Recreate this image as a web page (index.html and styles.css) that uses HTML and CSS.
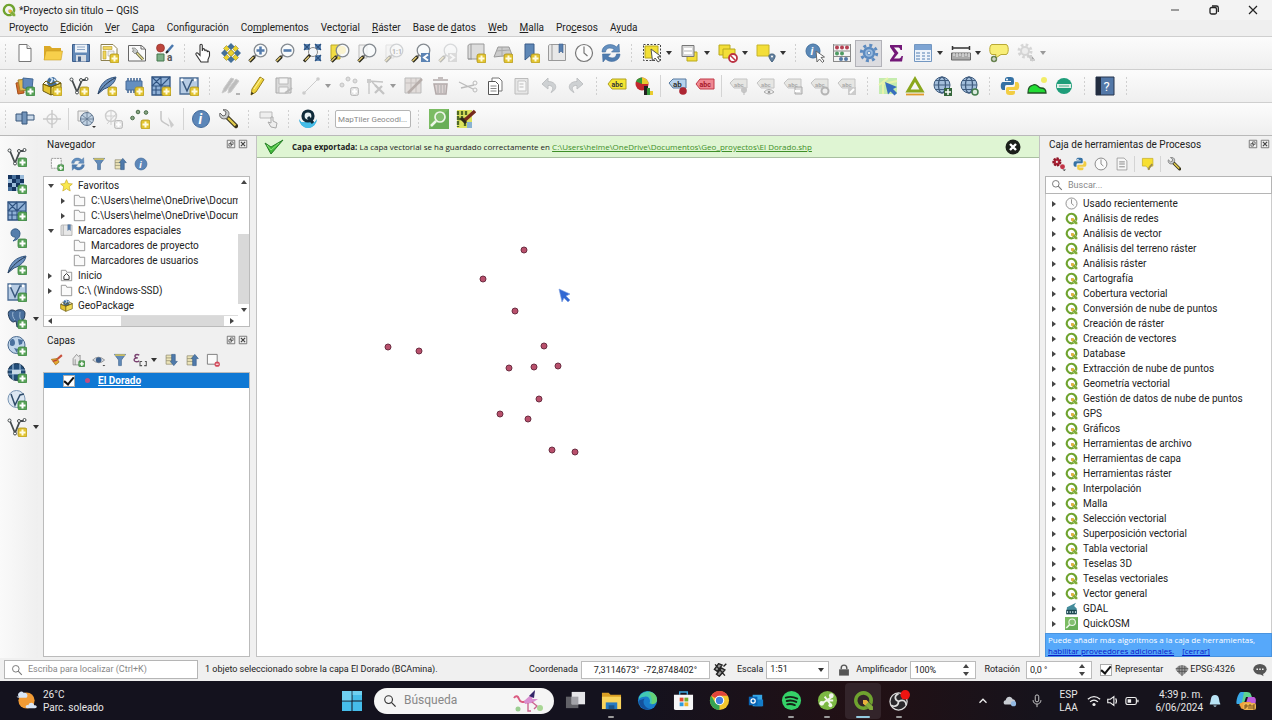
FILE: index.html
```html
<!DOCTYPE html>
<html lang="es">
<head>
<meta charset="utf-8">
<meta name="viewport" content="width=device-width, initial-scale=1">
<title>*Proyecto sin título — QGIS</title>
<link rel="stylesheet" href="styles.css">
</head>
<body>
<svg class="sprite" aria-hidden="true">
  <symbol id="by" viewBox="0 0 20 20"><rect x="11" y="11" width="9" height="9" rx="2" fill="#e3c531" stroke="#a98f1b" stroke-width=".8"/><path d="M15.500 12.500v6M12.500 15.500h6" stroke="#fffbe0" stroke-width="2"/></symbol>
  <symbol id="bg" viewBox="0 0 20 20"><rect x="11" y="11" width="9" height="9" rx="2" fill="#5aa35a" stroke="#35803b" stroke-width=".8"/><path d="M15.500 12.500v6M12.500 15.500h6" stroke="#fff" stroke-width="2"/></symbol>
  <symbol id="bx" viewBox="0 0 20 20"><rect x="11.500" y="11.500" width="8" height="8" rx="2" fill="#e2e2e2" stroke="#bbb"/><path d="M15.500 13v5M13 15.500h5" stroke="#fff" stroke-width="2"/></symbol>
  <symbol id="qgis" viewBox="0 0 20 20"><path d="M10 1a9 9 0 1 0 4.500 16.800L12 15.200a5.600 5.600 0 1 1 3.300-3.700l2.700 2.700A9 9 0 0 0 10 1z" fill="#6fa32f"/><path d="M9.500 9.500h3.200l6.300 6.300v3.200h-3.200L9.500 12.700z" fill="#82ad3a"/><path d="M9.500 9.500h3.200l2 2-3.200 3.200-2-2z" fill="#e8b13c"/></symbol>
  <symbol id="doc" viewBox="0 0 20 20"><path d="M4 1.500h8l4 4v13H4z" fill="#fff" stroke="#777"/><path d="M12 1.500v4h4" fill="#eee" stroke="#777"/></symbol>
  <symbol id="open" viewBox="0 0 20 20"><path d="M1 17V3h6l2 2h9v12z" fill="#dba927"/><path d="M1 17 3 8h16.500L18 17z" fill="#f7cf4b" stroke="#c99d22" stroke-width=".6"/></symbol>
  <symbol id="save" viewBox="0 0 20 20"><path d="M1.500 1.500h17v17h-17z" fill="#6288b6" stroke="#3d5e8c"/><path d="M4 1.500h12v8H4z" fill="#edf2f8"/><path d="M6 4h8M6 6.500h8" stroke="#8fa7c5"/><path d="M5 12h10v6.500H5z" fill="#d5dbe3"/><path d="M7 13.500h3v5H7z" fill="#46648d"/></symbol>
  <symbol id="layout" viewBox="0 0 20 20"><path d="M2 1.500h12l4 4v12H2z" fill="#fff" stroke="#8d8150"/><path d="M4 3.500h9v3H4zM4 8h3v8H4z" fill="#f1d65c" stroke="#b39a2b" stroke-width=".6"/><path d="M9 8h6v5H9z" fill="#eee" stroke="#aaa" stroke-width=".6"/><use href="#by"/></symbol>
  <symbol id="layoutmgr" viewBox="0 0 20 20"><path d="M1.500 2.500h13l4 3.500v12h-17z" fill="#fafafa" stroke="#666"/><path d="M14 2.500V6h4" fill="none" stroke="#666"/><path d="m9 9 7 7.500" stroke="#5f6046" stroke-width="3"/><path d="m10 10 6 6.500" stroke="#e4dc91" stroke-width="1.300"/><path d="M5 5l3 0 3 3-3 3-3-3 2 0z" fill="#c7cbc9" stroke="#777" stroke-width=".6"/></symbol>
  <symbol id="style" viewBox="0 0 20 20"><circle cx="5.500" cy="5" r="4" fill="#bd453c" stroke="#8c2922" stroke-width=".6"/><path d="M2 11h7v7H2z" fill="#7db087" stroke="#44774d"/><path d="m12 9 6-7" stroke="#4a78ae" stroke-width="2.500"/><path d="m11 10 2-2" stroke="#222" stroke-width="2"/><text x="12" y="18" font-size="10" font-weight="700" fill="#555">a</text></symbol>
  <symbol id="hand" viewBox="0 0 20 20"><path d="M7 19 2 11.500c-.6-1.600 1-2.200 2-1.200l2 2V2.500c0-1.700 2.200-1.700 2.300 0V8l.3-1.500c.6-1.300 2-1 2.200.3V8c.5-1.500 2.200-1.300 2.400.2V9c.4-1.300 2.300-1 2.300.5V13l-1.500 3.500V19z" fill="#fff" stroke="#333" stroke-width="1.100"/></symbol>
  <symbol id="panlayer" viewBox="0 0 20 20"><path d="m10 6.500 3.500 3.500-3.500 3.500L6.500 10z" fill="#ecd32f" stroke="#9f8b1d"/><path d="m5.500 2.500 3 3-3 3-3-3zM14.500 2.500l3 3-3 3-3-3zM5.500 11.500l3 3-3 3-3-3zM14.500 11.500l3 3-3 3-3-3z" fill="#ecd32f" stroke="#988a28" stroke-width=".6"/><path d="m10 0 3.500 3.500L10 7 6.500 3.500zM10 20l3.500-3.500L10 13l-3.500 3.500zM0 10l3.500-3.500L7 10l-3.500 3.500zM20 10l-3.500-3.500L13 10l3.500 3.500z" fill="#44709a"/></symbol>
  <symbol id="lens" viewBox="0 0 20 20"><circle cx="12.500" cy="7.500" r="6.300" fill="#f9fbfd" fill-opacity=".8" stroke="#858b91" stroke-width="1.300"/><path d="m8 12-2.200 2.200" stroke="#777" stroke-width="2"/><path d="m6.500 13.500-5 5" stroke="#28271b" stroke-width="3.400"/><path d="m5.500 14-4 4" stroke="#e3ca74" stroke-width="1.400"/></symbol>
  <symbol id="zin" viewBox="0 0 20 20"><use href="#lens"/><path d="M12.500 3.500v8M8.500 7.500h8" stroke="#547cad" stroke-width="2.500"/></symbol>
  <symbol id="zout" viewBox="0 0 20 20"><use href="#lens"/><path d="M8.500 7.500h8" stroke="#547cad" stroke-width="2.600"/></symbol>
  <symbol id="zfull" viewBox="0 0 20 20"><path d="M2 1h6v6H2zM13 1h6v6h-6zM13 12h6v6h-6z" fill="#5f88b6"/><path d="m2 1 6 6M8 1 2 7M13 1l6 6M19 1l-6 6M13 12l6 6M19 12l-6 6" stroke="#2c507d" stroke-width="1.300"/><circle cx="11" cy="9" r="4.500" fill="#f4f7fa" stroke="#888"/><path d="m8 12-6 6.500" stroke="#28271b" stroke-width="3"/><path d="m7 13.500-4 4" stroke="#e3ca74" stroke-width="1.200"/></symbol>
  <symbol id="zsel" viewBox="0 0 20 20"><path d="M1 2h9v14H1z" fill="#f2dd43" stroke="#bba82b"/><use href="#lens"/><circle cx="12" cy="7" r="4" fill="#faf3cf"/></symbol>
  <symbol id="zlayer" viewBox="0 0 20 20"><path d="M2 2h8v13H2z" fill="#f2f2f2" stroke="#bbb"/><use href="#lens"/></symbol>
  <symbol id="znat" viewBox="0 0 20 20"><g opacity=".35"><use href="#zlayer"/><text x="8" y="10.500" font-size="7" font-weight="700" fill="#444">1:1</text></g></symbol>
  <symbol id="zlast" viewBox="0 0 20 20"><use href="#lens"/><path d="M10 10h9v9h-9z" fill="#5c84b4"/><path d="m17 11.500-4 3 4 3" fill="none" stroke="#fff" stroke-width="2"/></symbol>
  <symbol id="znext" viewBox="0 0 20 20"><g opacity=".28"><use href="#lens"/><path d="M10 10h9v9h-9z" fill="#999"/><path d="m12 11.500 4 3-4 3" fill="none" stroke="#fff" stroke-width="2"/></g></symbol>
  <symbol id="newmap" viewBox="0 0 20 20"><path d="M2 3c0-1.500 2-2 3-2h13v15H2z" fill="#ddd" stroke="#999"/><path d="M5 1v15M2 16h4" stroke="#999" fill="none"/><use href="#by"/></symbol>
  <symbol id="map3d" viewBox="0 0 20 20"><path d="M1 14 5 4h11l3 8z" fill="#ccc" stroke="#999"/><path d="m3 8 14-1M9 4v10" stroke="#aaa"/><use href="#by"/></symbol>
  <symbol id="bookmark" viewBox="0 0 20 20"><path d="M5 1h9v16l-4.500-4L5 17z" fill="#5e87b6" stroke="#3a5d89"/><use href="#by"/></symbol>
  <symbol id="bmark2" viewBox="0 0 20 20"><path d="M1.500 3c0-1 1-1.500 2-1.500h15v16h-17z" fill="#e8e8e8" stroke="#999"/><path d="M5 2v15.500" stroke="#999"/><path d="M12 1h4v9l-2-2-2 2z" fill="#587fae" stroke="#395d8c" stroke-width=".6"/></symbol>
  <symbol id="clock" viewBox="0 0 20 20"><circle cx="10" cy="10" r="8.500" fill="#fbfbfb" stroke="#777" stroke-width="1.200"/><path d="M10 3.500V10l3.500 3" fill="none" stroke="#777" stroke-width="1.200"/></symbol>
  <symbol id="refresh" viewBox="0 0 20 20"><path d="M1 9C1 2 10-1 15.500 4l2.500-3 .5 8h-8l2.600-2.600C9 4 5 5 4.500 9z" fill="#638fbf" stroke="#416c9c" stroke-width=".6"/><path d="M19 11c0 7-9 10-14.500 5L2 19l-.5-8h8l-2.600 2.600C11 16 15 15 15.500 11z" fill="#4e7cb0" stroke="#416c9c" stroke-width=".6"/></symbol>
  <symbol id="select" viewBox="0 0 20 20"><path d="M1.500 1.500h17v16h-17z" fill="none" stroke="#444" stroke-dasharray="2 1.500"/><path d="M3 3h13v12H3z" fill="#f2df35" stroke="#b9a91e"/><path d="m9 6 1.500 12 2.700-3 2.800 4 2-1.400-2.500-3.700 3.500-.4z" fill="#fff" stroke="#555"/></symbol>
  <symbol id="selval" viewBox="0 0 20 20"><path d="M7 9h10v9H7z" fill="#f3de38" stroke="#b9a91e"/><path d="M2 2.500h12v11H2z" fill="#d9d9d9" stroke="#777"/><path d="M4 6h8M4 10h8" stroke="#fff" stroke-width="2"/></symbol>
  <symbol id="desel" viewBox="0 0 20 20"><path d="M1 2h11v10H1z" fill="#f3de38" stroke="#b9a91e"/><path d="M5 6h12v9H5z" fill="#f3de38" stroke="#b9a91e"/><circle cx="15" cy="15" r="4" fill="#fff" stroke="#bb3344" stroke-width="1.800"/><path d="m12.500 12.500 5 5" stroke="#bb3344" stroke-width="1.500"/></symbol>
  <symbol id="selloc" viewBox="0 0 20 20"><path d="M1 2h12v11H1z" fill="#f3de38" stroke="#c6b42b"/><path d="M16 19c-5-6-3-8 0-8s5 2 0 8z" fill="#6482a0" stroke="#44627f"/><circle cx="16" cy="13.500" r="1" fill="#fff"/></symbol>
  <symbol id="ident" viewBox="0 0 20 20"><circle cx="8" cy="8" r="7" fill="#5a88b7" stroke="#43719f"/><text x="5.500" y="12" font-size="11" font-style="italic" font-weight="700" fill="#fff">i</text><path d="m11 8 1 11 2.500-3 3 3.500 1.500-1.500-3-3.500 3.500-.5z" fill="#fff" stroke="#666"/></symbol>
  <symbol id="abacus" viewBox="0 0 20 20"><path d="M1.500 1v18M18.500 1v18M1 2h18M1 8h18M1 13.500h18M1 18.500h18" stroke="#8a8a8a" fill="none"/><g fill="#b54052"><circle cx="5" cy="4.500" r="2"/><circle cx="10" cy="4.500" r="2"/><circle cx="15" cy="4.500" r="2"/></g><g fill="#4e9b63"><circle cx="5" cy="10.500" r="2"/><circle cx="10" cy="10.500" r="2"/></g><g fill="#5479a6"><circle cx="9" cy="16" r="2"/><circle cx="14" cy="16" r="2"/></g></symbol>
  <symbol id="gear" viewBox="0 0 20 20"><circle cx="10" cy="10" r="7.700" fill="none" stroke="#5d8bc0" stroke-width="3" stroke-dasharray="3 3.050"/><circle cx="10" cy="10" r="5" fill="#9bbce0" stroke="#5d8bc0" stroke-width="2.500"/><circle cx="10" cy="10" r="1.800" fill="#e3ebf3" stroke="#5d8bc0"/></symbol>
  <symbol id="sigma" viewBox="0 0 20 20"><path d="M4 2h12v5h-1.500c-.5-2-1.500-2.500-3-2.500H8L12.500 10 8 15.500h4c2 0 3-.5 3.500-2.500H17l-1 5.500H4V17l4.500-6.500L4 4z" fill="#731878"/></symbol>
  <symbol id="table" viewBox="0 0 20 20"><path d="M1.500 1.500h17v17h-17z" fill="#edf3fa" stroke="#7397c1"/><path d="M2 2h16v5H2z" fill="#7da4d3"/><path d="M3 10h4M9 10h3M14 10h3M3 13h4M9 13h3M14 13h3M3 16h4M9 16h3M14 16h3" stroke="#86a6ca" stroke-width="1.400"/></symbol>
  <symbol id="ruler" viewBox="0 0 20 20"><path d="M1 5h18M1.500 3v4M18.500 3v4" stroke="#333" stroke-width="1.500"/><path d="M.5 10h19v7H.5z" fill="#aaa" stroke="#666"/><path d="M3 10v3M6 10v4M9 10v3M12 10v4M15 10v3M18 10v4" stroke="#eee"/></symbol>
  <symbol id="tip" viewBox="0 0 20 20"><path d="M3 1.500h14c3 0 3 10 0 10h-5l-6 4 1-4H3c-3 0-3-10 0-10z" fill="#f8ee77" stroke="#b9a935"/><circle cx="5" cy="16" r="3.200" fill="#688350"/><path d="M5 14v4M3 16h4" stroke="#eee"/></symbol>
  <symbol id="geargrey" viewBox="0 0 20 20"><g opacity=".35"><circle cx="9" cy="8" r="6" fill="none" stroke="#999" stroke-width="3" stroke-dasharray="2.500 2.200"/><circle cx="9" cy="8" r="4" fill="#ddd" stroke="#999" stroke-width="2"/><path d="m12 12 5 6m-2-6v5h4" stroke="#888" stroke-width="2"/></g></symbol>
  <symbol id="layers" viewBox="0 0 20 20"><path d="m1 7 7-1 1 11-6 1z" fill="#d36e2c" stroke="#a44c17"/><path d="m3 4 9-1v11l-7 1z" fill="#e2b84c" stroke="#a3812e"/><path d="m8 2 10 1-1 10-9-1z" fill="#6189bd" stroke="#426894"/><use href="#bg"/></symbol>
  <symbol id="gpkg" viewBox="0 0 20 20"><circle cx="10" cy="6" r="5" fill="#416e9f"/><path d="M8 2c3-1 3 3 0 5M12 3l3 4" stroke="#dfebf7" stroke-width="1.500" fill="none"/><path d="m1 8 8 3v8l-8-4z" fill="#e4c330" stroke="#6c5a0c"/><path d="m9 11 10-4v8L9 19z" fill="#f1db58" stroke="#6c5a0c"/><path d="m1 8 3-3 5 3 6-3 4 2-10 4z" fill="none" stroke="#6c5a0c"/></symbol>
  <symbol id="newgpkg" viewBox="0 0 20 20"><use href="#gpkg"/><use href="#by"/></symbol>
  <symbol id="vee" viewBox="0 0 20 20"><path d="m3 4 5 12 5-12h5" fill="none" stroke="#454b4d" stroke-width="1.800"/><g fill="#fff" stroke="#454b4d"><circle cx="2.500" cy="3.500" r="1.500"/><circle cx="8" cy="16.500" r="1.500"/><circle cx="12" cy="4" r="1.500"/><circle cx="17.500" cy="3" r="1.500"/></g></symbol>
  <symbol id="veey" viewBox="0 0 20 20"><use href="#vee"/><use href="#by"/></symbol>
  <symbol id="veeg" viewBox="0 0 20 20"><use href="#vee"/><use href="#bg"/></symbol>
  <symbol id="feather" viewBox="0 0 20 20"><path d="M1 18C3 8 9 2 19 1c-1 6-6 10-12 12z" fill="#6b91bf" stroke="#31537c"/><path d="M1 18C6 10 11 6 18 2" fill="none" stroke="#25364c"/></symbol>
  <symbol id="feathery" viewBox="0 0 20 20"><use href="#feather"/><use href="#by"/></symbol>
  <symbol id="featherg" viewBox="0 0 20 20"><use href="#feather"/><use href="#bg"/></symbol>
  <symbol id="chip" viewBox="0 0 20 20"><path d="M4 2v15M7 2v15M10 2v15M13 2v15M16 2v15" stroke="#476b98" stroke-width="1.600"/><path d="M2 5h16v9H2z" fill="#658fc0" stroke="#476b98"/><use href="#by"/></symbol>
  <symbol id="mesh" viewBox="0 0 20 20"><path d="M1 1h18v18H1z" fill="#8fb0d6" stroke="#2f5280" stroke-width="1.300"/><path d="M1 10h18M10 1v18M1 1l9 9M1 10l9-9M10 10l9-9M5 10v9M1 14h18M14 10v9" stroke="#2f5280" stroke-width="1.100"/></symbol>
  <symbol id="meshy" viewBox="0 0 20 20"><use href="#mesh"/><use href="#by"/></symbol>
  <symbol id="meshg" viewBox="0 0 20 20"><use href="#mesh"/><use href="#bg"/></symbol>
  <symbol id="virt" viewBox="0 0 20 20"><path d="M1 2h18v16H1z" fill="#b7cce4" stroke="#4b6c94" stroke-width="1.300"/><path d="M3 4l5 11 5-11h4" fill="none" stroke="#37577c" stroke-width="1.500"/><circle cx="3" cy="4" r="1.400" fill="#fff"/><circle cx="16" cy="4" r="1.400" fill="#fff"/></symbol>
  <symbol id="virty" viewBox="0 0 20 20"><use href="#virt"/><use href="#by"/></symbol>
  <symbol id="virtg" viewBox="0 0 20 20"><use href="#virt"/><use href="#bg"/></symbol>
  <symbol id="pencils" viewBox="0 0 20 20"><path d="m2 17 2-5L11 2l3 1-8 12zM8 17l1-5 7-9 3 2-8 11z" fill="#bdbdbd" stroke="#ccc"/><path d="M16 18h4" stroke="#777"/></symbol>
  <symbol id="pencil" viewBox="0 0 20 20"><path d="m4 19 1-6L13 1l4 2.500L9 16z" fill="#eed33c" stroke="#9b811a"/><path d="m7 13 7.500-11" stroke="#fff4a0"/><path d="m4 19 .6-3 2 1.300z" fill="#222"/></symbol>
  <symbol id="savegrey" viewBox="0 0 20 20"><path d="M2 2h15v15H2z" fill="#d9d9d9" stroke="#aaa"/><path d="M5 2h9v6H5zM5 11h9v6H5z" fill="#f5f5f5" stroke="#bbb"/><path d="m11 17 7-5" stroke="#bbb" stroke-width="2"/></symbol>
  <symbol id="linegrey" viewBox="0 0 20 20"><path d="M3 17 17 3" stroke="#ccc"/><circle cx="3" cy="17" r="1.800" fill="#ccc"/><circle cx="17" cy="3" r="1.800" fill="#ccc"/></symbol>
  <symbol id="ptsgrey" viewBox="0 0 20 20"><g fill="#ddd" stroke="#c4c4c4"><circle cx="3" cy="9" r="2"/><circle cx="9" cy="3" r="2"/><circle cx="16" cy="5" r="2"/></g><use href="#bx"/></symbol>
  <symbol id="nodegrey" viewBox="0 0 20 20"><path d="M3 18V5l14 1M6 6l5 5" fill="none" stroke="#c4c4c4" stroke-width="1.300"/><path d="M1 3h4v4H1z" fill="#ccc"/><path d="m9 17 7-7M9 9l9 9" stroke="#c4c4c4" stroke-width="2.300"/></symbol>
  <symbol id="attrgrey" viewBox="0 0 20 20"><path d="M1 2h16v15H1z" fill="#e1dcda" stroke="#bbb"/><path d="M1 7h16M7 2v15M12 2v15" stroke="#c5bfbd"/><path d="M4 17 18 3" stroke="#b7aeab" stroke-width="2.500"/></symbol>
  <symbol id="trash" viewBox="0 0 20 20"><path d="M2 4h15M7 2h5M3 8h13l-1 10H5z" fill="#ddd3d3" stroke="#b3aaaa" stroke-width="1.500"/><path d="M7 9v8M10 9v8M13 9v8" stroke="#aaa"/></symbol>
  <symbol id="cut" viewBox="0 0 20 20"><path d="m1 6 14 7M3 12l13-3" stroke="#bbb" stroke-width="1.300"/><circle cx="17" cy="7" r="2" fill="none" stroke="#bbb"/><circle cx="17" cy="14" r="2" fill="none" stroke="#bbb"/></symbol>
  <symbol id="copy" viewBox="0 0 20 20"><path d="M7 2h7l3 3v10H7z" fill="#fff" stroke="#777"/><path d="M3.500 5.500h7l3 3v10h-10z" fill="#fff" stroke="#555"/><path d="M5.500 10h6M5.500 12.500h6M5.500 15h6" stroke="#888"/></symbol>
  <symbol id="paste" viewBox="0 0 20 20"><path d="M3 2.500h13v15.500H3z" fill="#e6e6e6" stroke="#bbb"/><path d="M6 5h7l1 1v9H6z" fill="#f8f8f8" stroke="#c5c5c5"/><path d="M7.500 8h4M7.500 11h4" stroke="#bbb"/></symbol>
  <symbol id="undo" viewBox="0 0 20 20"><path d="M9 2 3 8l6 5V9.500c5-.5 6 3 3 7 8-4 5-11-3-11z" fill="#ced1d3" stroke="#bfc1c3"/></symbol>
  <symbol id="redo" viewBox="0 0 20 20"><path d="m11 2 6 6-6 5V9.500c-5-.5-6 3-3 7-8-4-5-11 3-11z" fill="#ced1d3" stroke="#bfc1c3"/></symbol>
  <symbol id="abc" viewBox="0 0 20 20"><path d="m1 8 4-5h14v10H5z" fill="#f5e633" stroke="#b1a221"/><text x="4.500" y="11" font-size="7" font-weight="700" fill="#333">abc</text></symbol>
  <symbol id="pie" viewBox="0 0 20 20"><circle cx="8" cy="8" r="6.500" fill="#c3272e"/><path d="M8 8V1.500A6.500 6.500 0 0 1 14.500 8z" fill="#e8cb2e"/><path d="M8 8 2 5.500C3 2.500 6 1.500 8 1.500z" fill="#36983a"/><path d="M10 10h4v9h-4z" fill="#222"/><path d="M13 12h3v7h-3z" fill="#36983a"/><path d="M16 15h3v4h-3z" fill="#e8cb2e"/></symbol>
  <symbol id="abpin" viewBox="0 0 20 20"><path d="m1 7 4-4h13v9H5z" fill="#b7d2ed" stroke="#56799f"/><text x="5" y="10.500" font-size="8" font-weight="700" fill="#333">ab</text><circle cx="15" cy="15" r="3.800" fill="#ad2532"/></symbol>
  <symbol id="abcred" viewBox="0 0 20 20"><path d="m1 8 4-5h14v10H5z" fill="#ef8892" stroke="#c13b49"/><text x="4.500" y="11" font-size="7" font-weight="700" fill="#a61427">abc</text></symbol>
  <symbol id="abcgrey" viewBox="0 0 20 20"><path d="m1 7 4-4h13v9H5z" fill="#e6e6e3" stroke="#c4c4c4"/><text x="5" y="10.500" font-size="6" font-weight="700" fill="#aaa">abc</text></symbol>
  <symbol id="lg1" viewBox="0 0 20 20"><use href="#abcgrey"/><circle cx="15" cy="14" r="3" fill="#c5c5c5"/><path d="M15 16v3" stroke="#bbb"/></symbol>
  <symbol id="lg2" viewBox="0 0 20 20"><use href="#abcgrey"/><path d="M8 16q5-5 10 0-5 4-10 0z" fill="#eee" stroke="#aaa"/><circle cx="13" cy="16" r="1.300" fill="#999"/></symbol>
  <symbol id="lg3" viewBox="0 0 20 20"><use href="#abcgrey"/><path d="M12 11h7v7h-7z" fill="#ddd" stroke="#aaa"/><path d="M12 15h5" stroke="#fff" stroke-width="2"/></symbol>
  <symbol id="lg4" viewBox="0 0 20 20"><use href="#abcgrey"/><circle cx="15" cy="15" r="3.500" fill="#eee" stroke="#b4b4b4" stroke-width="2"/></symbol>
  <symbol id="lg5" viewBox="0 0 20 20"><use href="#abcgrey"/><path d="M11 11h8v8h-8z" fill="#ccc"/><path d="m13 17 4-4" stroke="#fff" stroke-width="2"/></symbol>
  <symbol id="mapsel" viewBox="0 0 20 20"><path d="M1 2h18v16H1z" fill="#c5ecae"/><path d="M1 9 10 2M5 18V8l14-3" stroke="#e8f4ab" stroke-width="2" fill="none"/><path d="m7 6 12 5-4 2 4 4-2.500 2.500-4-4-2.500 3z" fill="#376ebd"/></symbol>
  <symbol id="tri" viewBox="0 0 20 20"><path d="M10 3 17 15H3z" fill="none" stroke="#8aa71d" stroke-width="3"/><path d="M1 18.500h18" stroke="#e09a28" stroke-width="1.800"/></symbol>
  <symbol id="globe" viewBox="0 0 20 20"><circle cx="10" cy="9" r="8" fill="#a3bedb" stroke="#405c7e"/><ellipse cx="10" cy="9" rx="3.500" ry="8" fill="none" stroke="#405c7e" stroke-width="1.300"/><path d="M2 9h16M3.500 4.500h13M3.500 13.500h13" stroke="#405c7e" stroke-width="1.200"/></symbol>
  <symbol id="globe1" viewBox="0 0 20 20"><use href="#globe"/><path d="M12 12h8v8h-8z" fill="#35653a"/><path d="M16 13v6m-3-3h6" stroke="#fff" stroke-width="1.500"/></symbol>
  <symbol id="globe2" viewBox="0 0 20 20"><use href="#globe"/><circle cx="16" cy="16" r="3" fill="#dceadf" stroke="#447e4d" stroke-width="1.500"/></symbol>
  <symbol id="python" viewBox="0 0 20 20"><path d="M9 1C5 1 5 2 5 5h6v1H3C0 6 0 14 3 14h2v-3c0-2 1-2 3-2h4c2 0 2-1 2-3 0-4 0-5-5-5z" fill="#3571a4"/><path d="M11 19c4 0 4-1 4-4H9v-1h8c3 0 3-8 0-8h-2v3c0 2-1 2-3 2H8c-2 0-2 1-2 3 0 4 0 5 5 5z" fill="#f2cd43"/><circle cx="7" cy="3.500" r="1" fill="#fff"/></symbol>
  <symbol id="hill" viewBox="0 0 20 20"><circle cx="17" cy="4" r="3" fill="#f2ed67"/><path d="M1 17c0-6 2-7 5-8 4-2 5 3 8 3 4 0 5 2 5 5z" fill="#22dc35" stroke="#225226" stroke-width="1.300"/></symbol>
  <symbol id="stop" viewBox="0 0 20 20"><circle cx="10" cy="10" r="8" fill="#1e9d79"/><path d="M3 8h14v4H3z" fill="#dfeee7"/><path d="M5 10h10" stroke="#50ab89"/></symbol>
  <symbol id="helpbook" viewBox="0 0 20 20"><path d="M1 1h18v18H1z" fill="#5378a8" stroke="#26354c"/><path d="M1 1h5v18H1z" fill="#222d40"/><text x="8.500" y="15" font-size="13" fill="#fff">?</text></symbol>
  <symbol id="boxes" viewBox="0 0 20 20"><path d="M1 5h8v7H1z" fill="#9bb5d2" stroke="#39577b"/><path d="M9 6h10v5H9z" fill="#cddbea" stroke="#39577b"/><path d="M7 3h5v12H7z" fill="#7193ba" stroke="#39577b"/></symbol>
  <symbol id="crossgrey" viewBox="0 0 20 20"><circle cx="10" cy="10" r="5" fill="none" stroke="#d0d0d0" stroke-width="1.400"/><path d="M10 1v18M1 10h18" stroke="#c8c8c8" stroke-width="1.400"/></symbol>
  <symbol id="geoglobe" viewBox="0 0 20 20"><path d="M2 2h10v10H2z" fill="#eee" stroke="#aaa"/><circle cx="11" cy="10" r="6.500" fill="#c0d1e2" stroke="#60758d"/><path d="M4 10h14M11 3v14M6 6l10 8M16 6 6 14" stroke="#60758d" stroke-width=".8"/><path d="m16 17h4l-2 2z" fill="#333"/></symbol>
  <symbol id="polygrey" viewBox="0 0 20 20"><circle cx="8" cy="7" r="5.500" fill="none" stroke="#ccc" stroke-width="1.400"/><path d="M8 1v15M2 7h12M4 15 13 5" stroke="#d0d0d0"/><use href="#bx"/></symbol>
  <symbol id="ptsy" viewBox="0 0 20 20"><g fill="#8aa685" stroke="#496c48"><circle cx="2.500" cy="9" r="1.800"/><circle cx="8" cy="3" r="1.800"/><circle cx="16" cy="3.500" r="1.800"/></g><use href="#by"/></symbol>
  <symbol id="curve" viewBox="0 0 20 20"><path d="M4 2v8c0 4 6 4 8 7" fill="none" stroke="#c5c5c5" stroke-width="1.500"/><path d="m11 8 6 8-3 3" fill="#ccc"/></symbol>
  <symbol id="info" viewBox="0 0 20 20"><circle cx="10" cy="10" r="8.500" fill="#5c86b8" stroke="#446b9b"/><text x="7.500" y="15" font-size="14" font-style="italic" font-weight="700" fill="#fff">i</text></symbol>
  <symbol id="wrench" viewBox="0 0 20 20"><path d="m9 8 9 9" stroke="#3a351d" stroke-width="4.500" stroke-linecap="round"/><path d="m10 9 7.500 7.500" stroke="#e1cb4b" stroke-width="2.300"/><path d="M2 4 5 7l2.500-1L8 3 5 .8c5-1 7 3 5.500 6L8.500 9.500C4 11 .5 8 2 4z" fill="#c9cccd" stroke="#666"/></symbol>
  <symbol id="boxhand" viewBox="0 0 20 20"><path d="M1 3h12v6H1z" fill="#eee" stroke="#bbb"/><path d="m12 18-3-5 3 1V8h2v4l4 2-1 5z" fill="#eee" stroke="#aaa"/></symbol>
  <symbol id="qms" viewBox="0 0 20 20"><path d="M1 10a9 9 0 0 0 18 0l-3 4c-3 3-9 3-12 0z" fill="#2ca9dc"/><path d="M2 13h16q-3 6-8 6t-8-6z" fill="#45bde8"/><circle cx="10" cy="7" r="5" fill="#e8f2f5" stroke="#102b3a" stroke-width="3.200"/><path d="m10 8 5 6" stroke="#102b3a" stroke-width="3"/></symbol>
  <symbol id="osm" viewBox="0 0 20 20"><path d="M0 0h20v20H0z" fill="#68ae57"/><path d="M0 0h20L0 20z" fill="#8dca70" opacity=".5"/><circle cx="11" cy="8" r="5" fill="#83be70" stroke="#eef6e9" stroke-width="1.700"/><path d="m7 12-5 5" stroke="#eef6e9" stroke-width="2.500"/></symbol>
  <symbol id="osmedit" viewBox="0 0 20 20"><path d="M1 1h15v18H1z" fill="#dce35e"/><path d="M2 2v16M6 2v7M10 2v5M2 10h7v8" stroke="#4f6823" stroke-width="2.300" fill="none" stroke-dasharray="4 1"/><path d="M11 13h5v6h-5z" fill="#8ab3d1"/><path d="m9 11 10-9" stroke="#762a1d" stroke-width="3.500"/><path d="m5 9 5 5" stroke="#2f291a" stroke-width="3"/></symbol>
  <symbol id="raster" viewBox="0 0 20 20"><path d="M1 1h16v16H1z" fill="#9bbbd9"/><path d="M1 1h4v4H1zM9 1h4v4H9zM5 5h4v4H5zM13 5h4v4h-4zM1 9h4v4H1zM9 9h4v4H9zM5 13h4v4H5z" fill="#15345f"/><path d="M5 1h4v4H5zM9 5h4v4H9zM1 13h4v4H1z" fill="#47709b"/><use href="#bg"/></symbol>
  <symbol id="comma" viewBox="0 0 20 20"><path d="M4 5c0-5 8-6 9 0 0 5-3 7-7 8 2-2 3-3 2-4-2 0-4-1-4-4z" fill="#557eac" stroke="#355d88"/><use href="#bg"/></symbol>
  <symbol id="pg" viewBox="0 0 20 20"><path d="M1.500 3c2-3 5-2 7-1 3-2 9-2 9.500 2 0 4-1 7-4 8v5l-4 1-1-6-2.500 1C3 13 .5 6 1.500 3z" fill="#496f9c" stroke="#243c59"/><path d="M6 3c-1 3 0 6 2 8M13 3c0 3-1 5 1 8" stroke="#9db8d4" fill="none"/><use href="#bg"/></symbol>
  <symbol id="wglobe" viewBox="0 0 20 20"><circle cx="9.500" cy="9" r="8.500" fill="#c0d5ea" stroke="#49698e"/><path d="M3 5c3-4 5-1 5 2S5 11 3 9zM11 3l5 1-1 4-3 1zM7 12l4 1-1 4z" fill="#49709d"/><use href="#bg"/></symbol>
  <symbol id="wcs" viewBox="0 0 20 20"><circle cx="9.500" cy="9" r="8.500" fill="#224c77" stroke="#152f4b"/><path d="M1 7h17M1 11h17M6 1v16M13 1v16" stroke="#95b6d5" stroke-width="1.200"/><path d="M5 7h9v4H5z" fill="#c9d9e8"/><use href="#bg"/></symbol>
  <symbol id="wfs" viewBox="0 0 20 20"><circle cx="9.500" cy="9" r="8.500" fill="#dce7f2" stroke="#7b97b5"/><path d="m4 4 4 11 5-10 4-1" fill="none" stroke="#304d6b" stroke-width="1.500"/><use href="#bg"/></symbol>
  <symbol id="folder" viewBox="0 0 20 20"><path d="M2 18V2h7l1.500 3H18v13z" fill="#fafafa" stroke="#8a8a8a" stroke-width="1.300"/></symbol>
  <symbol id="home" viewBox="0 0 20 20"><use href="#folder"/><path d="m6 11 4-4 4 4v5H6z" fill="#fff" stroke="#333" stroke-width="1.500"/></symbol>
  <symbol id="star" viewBox="0 0 20 20"><path d="m10 1 2.700 6 6.300.6-4.800 4.200 1.500 6.700-5.700-3.500-5.700 3.500 1.500-6.700L1 7.600 7.300 7z" fill="#f9e84d" stroke="#c7a91f"/></symbol>
  <symbol id="addlay" viewBox="0 0 20 20"><path d="M2 2h14v14H2z" fill="#fafafa" stroke="#777" stroke-dasharray="3 1"/><use href="#bg"/></symbol>
  <symbol id="filter" viewBox="0 0 20 20"><path d="M2 2h16l-6 8v8H8v-8z" fill="#628bb9" stroke="#466a93"/><path d="M3 3h14" stroke="#e3c94f" stroke-width="2"/></symbol>
  <symbol id="collapse" viewBox="0 0 20 20"><path d="M3 4h9v13H3z" fill="#ece4b8" stroke="#8c866c"/><path d="M3 8h9M3 12h9" stroke="#8c866c"/><path d="m14 2 5 6h-3v10h-5V8H9z" fill="#4f7aab" stroke="#38608c"/></symbol>
  <symbol id="expand" viewBox="0 0 20 20"><path d="M3 3h9v13H3z" fill="#ece4b8" stroke="#8c866c"/><path d="M3 7h9M3 11h9" stroke="#8c866c"/><path d="m14 18 5-6h-3V2h-5v10H9z" fill="#4f7aab" stroke="#38608c"/></symbol>
  <symbol id="brush" viewBox="0 0 20 20"><path d="m9 10 8-7" stroke="#c74f3b" stroke-width="3"/><path d="m2 9 8-1 3 5-5 4z" fill="#e4a72f" stroke="#a06d18"/><path d="m4 12 6-2" stroke="#bf4237" stroke-width="2"/></symbol>
  <symbol id="addgroup" viewBox="0 0 20 20"><path d="M3 17V8l5-6 3 3 2-2v14z" fill="#e8e8e8" stroke="#777"/><path d="M6 9v8" stroke="#777"/><use href="#bg"/></symbol>
  <symbol id="eye" viewBox="0 0 20 20"><path d="M1 10q8-8 17 0-8 8-17 0z" fill="#d5dbe3" stroke="#777"/><circle cx="9.500" cy="10" r="4" fill="#3c5f8b"/><path d="M15 17h4l-2 2z" fill="#333"/></symbol>
  <symbol id="eps" viewBox="0 0 20 20"><path d="M9 3C5 1 2 3 3 5c0 2 3 2 4 2C2 7 1 9 2 11s5 2 7 0" fill="none" stroke="#78416f" stroke-width="2"/><path d="M10 12h3m-3 0v6h3M17 12h2v6h-3" stroke="#555" stroke-width="1.500" fill="none"/></symbol>
  <symbol id="remlay" viewBox="0 0 20 20"><path d="M2 2h14v14H2z" fill="#fafafa" stroke="#777" stroke-width="1.300"/><circle cx="16" cy="16" r="3.800" fill="#d3495a"/><path d="M14 16h4" stroke="#fff" stroke-width="1.500"/></symbol>
  <symbol id="models" viewBox="0 0 20 20"><circle cx="7" cy="7" r="5" fill="#af2438" stroke="#8e1829" stroke-width="3" stroke-dasharray="3 1.500"/><circle cx="15" cy="14" r="3.500" fill="#c23346"/><circle cx="7" cy="7" r="1.500" fill="#eee"/><path d="M15 18h5l-2.500 2z" fill="#333"/></symbol>
  <symbol id="report" viewBox="0 0 20 20"><path d="M3 1.500h10l4 4v13H3z" fill="#f7f7f7" stroke="#888"/><path d="M6 7h8M6 10h8M6 14h8" stroke="#888" stroke-width="1.400"/></symbol>
  <symbol id="editnote" viewBox="0 0 20 20"><path d="M2 2h15v11h-5v5l-5-5H2z" fill="#f7df31" stroke="#c3aa1e"/><path d="m10 18 6-8" stroke="#9b8b4f" stroke-width="2.500"/></symbol>
  <symbol id="gdal" viewBox="0 0 20 20"><path d="M3 8 17 1l-3 5 4 4v8H2z" fill="#458d9c"/><path d="M2 12h16v7H2z" fill="#1c4650"/><path d="M4 14v3M8 14v3M12 14v3M16 14v3" stroke="#d7eef2" stroke-width="1.500"/></symbol>
  <symbol id="search" viewBox="0 0 20 20"><circle cx="8" cy="8" r="5.500" fill="none" stroke="currentColor" stroke-width="1.600"/><path d="m12 12 6 6" stroke="currentColor" stroke-width="1.800"/></symbol>
  <symbol id="float" viewBox="0 0 12 12"><path d="M1.500 1.500h9v9h-9z" fill="none" stroke="#666"/><path d="M5.500 3.500h3v3h-3zM3.500 5.500h3v3h-3z" fill="#fff" stroke="#555"/></symbol>
  <symbol id="shut" viewBox="0 0 12 12"><path d="M1.500 1.500h9v9h-9z" fill="none" stroke="#666"/><path d="m3.500 3.500 5 5M8.500 3.500l-5 5" stroke="#444" stroke-width="1.500"/></symbol>
</svg>

<div class="app">
  <header class="titlebar">
    <svg class="i14"><use href="#qgis"/></svg>
    <h1>*Proyecto sin título — QGIS</h1>
    <div class="wincontrols">
      <button aria-label="Minimizar"><svg viewBox="0 0 12 12"><path d="M2 6h8" stroke="#444"/></svg></button>
      <button aria-label="Restaurar"><svg viewBox="0 0 12 12"><rect x="2" y="3.500" width="6.500" height="6.500" rx="1.500" fill="none" stroke="#222" stroke-width="1.300"/><path d="M4 2h4.500c1 0 1.800.8 1.800 1.800V8" fill="none" stroke="#222" stroke-width="1.300"/></svg></button>
      <button aria-label="Cerrar"><svg viewBox="0 0 12 12"><path d="m2 2 8 8M10 2l-8 8" stroke="#222" stroke-width="1.200"/></svg></button>
    </div>
  </header>
  <nav class="menubar">
    <button>Pro<u>y</u>ecto</button><button><u>E</u>dición</button><button><u>V</u>er</button><button><u>C</u>apa</button><button>Confi<u>g</u>uración</button><button>Co<u>m</u>plementos</button><button>Vect<u>o</u>rial</button><button><u>R</u>áster</button><button>Base de <u>d</u>atos</button><button><u>W</u>eb</button><button><u>M</u>alla</button><button>Pro<u>c</u>esos</button><button>A<u>y</u>uda</button>
  </nav>

  <div class="toolbar">
    <i class="grip first"></i>
    <button class="tb wide" aria-label="Nuevo"><svg><use href="#doc"/></svg></button>
    <button class="tb wide" aria-label="Abrir"><svg><use href="#open"/></svg></button>
    <button class="tb wide" aria-label="Guardar"><svg><use href="#save"/></svg></button>
    <button class="tb wide" aria-label="Nueva composición"><svg><use href="#layout"/></svg></button>
    <button class="tb wide" aria-label="Administrador de composiciones"><svg><use href="#layoutmgr"/></svg></button>
    <button class="tb" aria-label="Administrador de estilos"><svg><use href="#style"/></svg></button>
    <i class="grip"></i>
    <button class="tb" aria-label="Desplazar"><svg><use href="#hand"/></svg></button>
    <button class="tb" aria-label="Desplazar a selección"><svg><use href="#panlayer"/></svg></button>
    <button class="tb" aria-label="Acercar"><svg><use href="#zin"/></svg></button>
    <button class="tb" aria-label="Alejar"><svg><use href="#zout"/></svg></button>
    <button class="tb wide" aria-label="Zum general"><svg><use href="#zfull"/></svg></button>
    <button class="tb" aria-label="Zum a la selección"><svg><use href="#zsel"/></svg></button>
    <button class="tb" aria-label="Zum a la capa"><svg><use href="#zlayer"/></svg></button>
    <button class="tb" aria-label="Zum nativo"><svg><use href="#znat"/></svg></button>
    <button class="tb" aria-label="Zum anterior"><svg><use href="#zlast"/></svg></button>
    <button class="tb wide" aria-label="Zum siguiente"><svg><use href="#znext"/></svg></button>
    <button class="tb" aria-label="Nueva vista"><svg><use href="#newmap"/></svg></button>
    <button class="tb" aria-label="Nueva vista 3D"><svg><use href="#map3d"/></svg></button>
    <button class="tb" aria-label="Nuevo marcador"><svg><use href="#bookmark"/></svg></button>
    <button class="tb" aria-label="Marcadores"><svg><use href="#bmark2"/></svg></button>
    <button class="tb" aria-label="Controlador temporal"><svg><use href="#clock"/></svg></button>
    <button class="tb" aria-label="Actualizar"><svg><use href="#refresh"/></svg></button>
    <i class="grip m"></i>
    <button class="tb drop" aria-label="Seleccionar"><svg><use href="#select"/></svg></button>
    <button class="tb drop" aria-label="Seleccionar por valor"><svg><use href="#selval"/></svg></button>
    <button class="tb drop" aria-label="Deseleccionar"><svg><use href="#desel"/></svg></button>
    <button class="tb drop" aria-label="Seleccionar por localización"><svg><use href="#selloc"/></svg></button>
    <i class="grip first"></i>
    <button class="tb" aria-label="Identificar"><svg><use href="#ident"/></svg></button>
    <button class="tb" aria-label="Calculadora de campos"><svg><use href="#abacus"/></svg></button>
    <button class="tb on" aria-label="Caja de herramientas" aria-pressed="true"><svg><use href="#gear"/></svg></button>
    <button class="tb" aria-label="Resumen estadístico"><svg><use href="#sigma"/></svg></button>
    <button class="tb drop" aria-label="Tabla de atributos"><svg><use href="#table"/></svg></button>
    <button class="tb drop" aria-label="Medir"><svg><use href="#ruler"/></svg></button>
    <button class="tb" aria-label="Avisos del mapa"><svg><use href="#tip"/></svg></button>
    <button class="tb drop off" aria-label="Acción"><svg><use href="#geargrey"/></svg></button>
  </div>

  <div class="toolbar">
    <i class="grip first"></i>
    <button class="tb" aria-label="Fuentes de datos"><svg><use href="#layers"/></svg></button>
    <button class="tb" aria-label="Nueva GeoPackage"><svg><use href="#newgpkg"/></svg></button>
    <button class="tb wide" aria-label="Nueva shapefile"><svg><use href="#veey"/></svg></button>
    <button class="tb" aria-label="Nueva SpatiaLite"><svg><use href="#feathery"/></svg></button>
    <button class="tb" aria-label="Capa temporal"><svg><use href="#chip"/></svg></button>
    <button class="tb wide" aria-label="Nueva malla"><svg><use href="#meshy"/></svg></button>
    <button class="tb" aria-label="Nueva capa virtual"><svg><use href="#virty"/></svg></button>
    <i class="grip m"></i>
    <button class="tb" aria-label="Ediciones actuales"><svg><use href="#pencils"/></svg></button>
    <button class="tb" aria-label="Conmutar edición"><svg><use href="#pencil"/></svg></button>
    <button class="tb" aria-label="Guardar cambios"><svg><use href="#savegrey"/></svg></button>
    <button class="tb drop off" aria-label="Digitalizar"><svg><use href="#linegrey"/></svg></button>
    <button class="tb" aria-label="Añadir puntos"><svg><use href="#ptsgrey"/></svg></button>
    <button class="tb drop off" aria-label="Herramienta de vértices"><svg><use href="#nodegrey"/></svg></button>
    <button class="tb" aria-label="Modificar atributos"><svg><use href="#attrgrey"/></svg></button>
    <button class="tb" aria-label="Borrar"><svg><use href="#trash"/></svg></button>
    <button class="tb" aria-label="Cortar"><svg><use href="#cut"/></svg></button>
    <button class="tb" aria-label="Copiar"><svg><use href="#copy"/></svg></button>
    <button class="tb" aria-label="Pegar"><svg><use href="#paste"/></svg></button>
    <button class="tb" aria-label="Deshacer"><svg><use href="#undo"/></svg></button>
    <button class="tb" aria-label="Rehacer"><svg><use href="#redo"/></svg></button>
    <i class="grip m"></i>
    <button class="tb" aria-label="Etiquetado"><svg><use href="#abc"/></svg></button>
    <button class="tb" aria-label="Diagramas"><svg><use href="#pie"/></svg></button>
    <i class="sep"></i>
    <button class="tb" aria-label="Etiquetas fijadas"><svg><use href="#abpin"/></svg></button>
    <button class="tb" aria-label="Etiquetas no ubicadas"><svg><use href="#abcred"/></svg></button>
    <i class="sep"></i>
    <button class="tb" aria-label="Fijar etiqueta"><svg><use href="#lg1"/></svg></button>
    <button class="tb" aria-label="Mostrar etiqueta"><svg><use href="#lg2"/></svg></button>
    <button class="tb" aria-label="Mover etiqueta"><svg><use href="#lg3"/></svg></button>
    <button class="tb" aria-label="Rotar etiqueta"><svg><use href="#lg4"/></svg></button>
    <button class="tb" aria-label="Cambiar etiqueta"><svg><use href="#lg5"/></svg></button>
    <i class="grip m"></i>
    <button class="tb" aria-label="Extensión del mapa"><svg><use href="#mapsel"/></svg></button>
    <button class="tb" aria-label="Triángulo"><svg><use href="#tri"/></svg></button>
    <button class="tb" aria-label="Servicios web"><svg><use href="#globe1"/></svg></button>
    <button class="tb" aria-label="Buscar servicios"><svg><use href="#globe2"/></svg></button>
    <i class="grip m"></i>
    <button class="tb" aria-label="Consola de Python"><svg><use href="#python"/></svg></button>
    <button class="tb" aria-label="Terreno"><svg><use href="#hill"/></svg></button>
    <button class="tb" aria-label="Complemento"><svg><use href="#stop"/></svg></button>
    <i class="grip m"></i>
    <button class="tb" aria-label="Ayuda"><svg><use href="#helpbook"/></svg></button>
    <i class="grip l"></i>
  </div>

  <div class="toolbar">
    <i class="grip first"></i>
    <button class="tb" aria-label="Alinear"><svg><use href="#boxes"/></svg></button>
    <button class="tb" aria-label="Centrar"><svg><use href="#crossgrey"/></svg></button>
    <i class="sep"></i>
    <button class="tb" aria-label="Georreferenciar"><svg><use href="#geoglobe"/></svg></button>
    <button class="tb" aria-label="Añadir polígono"><svg><use href="#polygrey"/></svg></button>
    <button class="tb" aria-label="Añadir puntos"><svg><use href="#ptsy"/></svg></button>
    <button class="tb" aria-label="Curva"><svg><use href="#curve"/></svg></button>
    <i class="sep"></i>
    <button class="tb" aria-label="Información"><svg><use href="#info"/></svg></button>
    <button class="tb" aria-label="Configuración"><svg><use href="#wrench"/></svg></button>
    <i class="grip m"></i>
    <button class="tb" aria-label="Seleccionar objeto"><svg><use href="#boxhand"/></svg></button>
    <i class="grip"></i>
    <button class="tb" aria-label="QuickMapServices"><svg><use href="#qms"/></svg></button>
    <i class="grip m"></i>
    <input class="geocoder" type="text" aria-label="Geocodificador" placeholder="MapTiler Geocodi...">
    <i class="grip m"></i>
    <button class="tb" aria-label="QuickOSM"><svg><use href="#osm"/></svg></button>
    <button class="tb" aria-label="Editar OSM"><svg><use href="#osmedit"/></svg></button>
  </div>

  <main class="work">
    <div class="sidebar">
      <button class="tb" aria-label="Añadir capa vectorial"><svg><use href="#veeg"/></svg></button>
      <button class="tb" aria-label="Añadir capa ráster"><svg><use href="#raster"/></svg></button>
      <button class="tb" aria-label="Añadir capa de malla"><svg><use href="#meshg"/></svg></button>
      <button class="tb" aria-label="Añadir texto delimitado"><svg><use href="#comma"/></svg></button>
      <button class="tb" aria-label="Añadir SpatiaLite"><svg><use href="#featherg"/></svg></button>
      <button class="tb" aria-label="Añadir capa virtual"><svg><use href="#virtg"/></svg></button>
      <button class="tb drop" aria-label="Añadir PostGIS"><svg><use href="#pg"/></svg></button>
      <button class="tb" aria-label="Añadir WMS"><svg><use href="#wglobe"/></svg></button>
      <button class="tb" aria-label="Añadir WCS"><svg><use href="#wcs"/></svg></button>
      <button class="tb" aria-label="Añadir WFS"><svg><use href="#wfs"/></svg></button>
      <button class="tb drop" aria-label="Nueva capa"><svg><use href="#veey"/></svg></button>
    </div>

    <div class="docks">
      <section class="browser">
        <div class="dockhead"><h2>Navegador</h2><button aria-label="Flotar"><svg><use href="#float"/></svg></button><button aria-label="Cerrar"><svg><use href="#shut"/></svg></button></div>
        <div class="minibar">
          <button aria-label="Añadir capas"><svg><use href="#addlay"/></svg></button><button aria-label="Actualizar"><svg><use href="#refresh"/></svg></button><button aria-label="Filtrar"><svg><use href="#filter"/></svg></button><button aria-label="Comprimir todo"><svg><use href="#collapse"/></svg></button><button aria-label="Propiedades"><svg><use href="#info"/></svg></button>
        </div>
        <div class="treebox">
          <ul class="tree">
            <li><i class="open"></i><svg><use href="#star"/></svg>Favoritos</li>
            <li class="sub"><i class="shut"></i><svg><use href="#folder"/></svg><span>C:\Users\helme\OneDrive\Docum</span></li>
            <li class="sub"><i class="shut"></i><svg><use href="#folder"/></svg><span>C:\Users\helme\OneDrive\Docum</span></li>
            <li><i class="open"></i><svg><use href="#bmark2"/></svg>Marcadores espaciales</li>
            <li class="sub"><i></i><svg><use href="#folder"/></svg>Marcadores de proyecto</li>
            <li class="sub"><i></i><svg><use href="#folder"/></svg>Marcadores de usuarios</li>
            <li><i class="shut"></i><svg><use href="#home"/></svg>Inicio</li>
            <li><i class="shut"></i><svg><use href="#folder"/></svg>C:\ (Windows-SSD)</li>
            <li><i></i><svg><use href="#gpkg"/></svg>GeoPackage</li>
          </ul>
          <div class="vscroll"><i class="up"></i><b></b><i class="open"></i></div>
          <div class="hscroll"><i class="left"></i><b></b><i class="shut"></i></div>
        </div>
      </section>
      <section class="layers">
        <div class="dockhead"><h2>Capas</h2><button aria-label="Flotar"><svg><use href="#float"/></svg></button><button aria-label="Cerrar"><svg><use href="#shut"/></svg></button></div>
        <div class="minibar">
          <button aria-label="Estilo"><svg><use href="#brush"/></svg></button><button aria-label="Añadir grupo"><svg><use href="#addgroup"/></svg></button><button aria-label="Visibilidad"><svg><use href="#eye"/></svg></button><button aria-label="Filtrar leyenda"><svg><use href="#filter"/></svg></button><button class="drop" aria-label="Filtrar por expresión"><svg><use href="#eps"/></svg></button><button aria-label="Expandir todo"><svg><use href="#expand"/></svg></button><button aria-label="Comprimir todo"><svg><use href="#collapse"/></svg></button><button aria-label="Eliminar capa"><svg><use href="#remlay"/></svg></button>
        </div>
        <div class="layerlist">
          <label class="layer"><input type="checkbox" checked><i class="sym"></i><span>El Dorado</span></label>
        </div>
      </section>
    </div>

    <section class="canvas">
      <div class="message">
        <svg class="check" viewBox="0 0 20 16"><path d="m1 4 6 4L19 1 7 15z" fill="#43bb3b" stroke="#267d26"/><path d="m3 6 4 5 8-7" fill="none" stroke="#8de27e"/></svg>
        <p><strong>Capa exportada:</strong> La capa vectorial se ha guardado correctamente en <a href="#shp">C:\Users\helme\OneDrive\Documentos\Geo_proyectos\El Dorado.shp</a></p>
        <button aria-label="Cerrar mensaje"><svg viewBox="0 0 16 16"><circle cx="8" cy="8" r="7.500" fill="#1b1f1a"/><path d="m5 5 6 6M11 5l-6 6" stroke="#fff" stroke-width="2.400"/></svg></button>
      </div>
      <div class="map">
        <svg role="img" aria-label="Puntos de la capa El Dorado">
          <g fill="#b9506c" stroke="#6c2e42">
            <circle cx="267" cy="92" r="3"/><circle cx="226" cy="121" r="3"/><circle cx="258" cy="153" r="3"/><circle cx="131" cy="189" r="3"/><circle cx="162" cy="193" r="3"/><circle cx="287" cy="188" r="3"/><circle cx="252" cy="210" r="3"/><circle cx="277" cy="209" r="3"/><circle cx="301" cy="208" r="3"/><circle cx="282" cy="241" r="3"/><circle cx="243" cy="256" r="3"/><circle cx="271" cy="261" r="3"/><circle cx="295" cy="292" r="3"/><circle cx="318" cy="294" r="3"/>
          </g>
          <path d="m302 131 11 5-4 2 4 4-2 2-4-4-2 4z" fill="#3268d3" stroke="#7e9fe0" stroke-width=".6"/>
        </svg>
      </div>
    </section>

    <section class="processing">
      <div class="dockhead"><h2>Caja de herramientas de Procesos</h2><button aria-label="Flotar"><svg><use href="#float"/></svg></button><button aria-label="Cerrar"><svg><use href="#shut"/></svg></button></div>
      <div class="minibar">
        <button aria-label="Modelos"><svg><use href="#models"/></svg></button><button aria-label="Scripts"><svg><use href="#python"/></svg></button><button aria-label="Historial"><svg><use href="#clock"/></svg></button><button aria-label="Resultados"><svg><use href="#report"/></svg></button><i class="sep"></i><button aria-label="Editar en el sitio"><svg><use href="#editnote"/></svg></button><i class="sep"></i><button aria-label="Opciones"><svg><use href="#wrench"/></svg></button>
      </div>
      <label class="search"><svg><use href="#search"/></svg><input type="text" placeholder="Buscar..." aria-label="Buscar algoritmos"></label>
      <ul class="tree algs">
        <li><i class="shut"></i><svg><use href="#clock"/></svg>Usado recientemente</li>
        <li><i class="shut"></i><svg><use href="#qgis"/></svg>Análisis de redes</li>
        <li><i class="shut"></i><svg><use href="#qgis"/></svg>Análisis de vector</li>
        <li><i class="shut"></i><svg><use href="#qgis"/></svg>Análisis del terreno ráster</li>
        <li><i class="shut"></i><svg><use href="#qgis"/></svg>Análisis ráster</li>
        <li><i class="shut"></i><svg><use href="#qgis"/></svg>Cartografía</li>
        <li><i class="shut"></i><svg><use href="#qgis"/></svg>Cobertura vectorial</li>
        <li><i class="shut"></i><svg><use href="#qgis"/></svg>Conversión de nube de puntos</li>
        <li><i class="shut"></i><svg><use href="#qgis"/></svg>Creación de ráster</li>
        <li><i class="shut"></i><svg><use href="#qgis"/></svg>Creación de vectores</li>
        <li><i class="shut"></i><svg><use href="#qgis"/></svg>Database</li>
        <li><i class="shut"></i><svg><use href="#qgis"/></svg>Extracción de nube de puntos</li>
        <li><i class="shut"></i><svg><use href="#qgis"/></svg>Geometría vectorial</li>
        <li><i class="shut"></i><svg><use href="#qgis"/></svg>Gestión de datos de nube de puntos</li>
        <li><i class="shut"></i><svg><use href="#qgis"/></svg>GPS</li>
        <li><i class="shut"></i><svg><use href="#qgis"/></svg>Gráficos</li>
        <li><i class="shut"></i><svg><use href="#qgis"/></svg>Herramientas de archivo</li>
        <li><i class="shut"></i><svg><use href="#qgis"/></svg>Herramientas de capa</li>
        <li><i class="shut"></i><svg><use href="#qgis"/></svg>Herramientas ráster</li>
        <li><i class="shut"></i><svg><use href="#qgis"/></svg>Interpolación</li>
        <li><i class="shut"></i><svg><use href="#qgis"/></svg>Malla</li>
        <li><i class="shut"></i><svg><use href="#qgis"/></svg>Selección vectorial</li>
        <li><i class="shut"></i><svg><use href="#qgis"/></svg>Superposición vectorial</li>
        <li><i class="shut"></i><svg><use href="#qgis"/></svg>Tabla vectorial</li>
        <li><i class="shut"></i><svg><use href="#qgis"/></svg>Teselas 3D</li>
        <li><i class="shut"></i><svg><use href="#qgis"/></svg>Teselas vectoriales</li>
        <li><i class="shut"></i><svg><use href="#qgis"/></svg>Vector general</li>
        <li><i class="shut"></i><svg><use href="#gdal"/></svg>GDAL</li>
        <li><i class="shut"></i><svg><use href="#osm"/></svg>QuickOSM</li>
      </ul>
      <p class="hint">Puede añadir más algoritmos a la caja de herramientas, <a href="#prov">habilitar proveedores adicionales.</a> <a class="close" href="#cerrar">[cerrar]</a></p>
    </section>
  </main>

  <footer class="status">
    <label class="locator"><svg><use href="#search"/></svg><input type="text" placeholder="Escriba para localizar (Ctrl+K)" aria-label="Localizar"></label>
    <span class="note">1 objeto seleccionado sobre la capa El Dorado (BCAmina).</span>
    <label for="coord">Coordenada</label>
    <input id="coord" class="field coord" type="text" value="7,3114673°  -72,8748402°">
    <svg class="i14 extent" viewBox="0 0 20 20"><path d="M3 2 17 18M8 1l-6 8 4 3 7-9zM12 7l-7 9 4 3 8-9zM15 5l4-4" fill="#999" stroke="#222" stroke-width="2"/></svg>
    <label for="scale">Escala</label>
    <span class="selectwrap"><select id="scale" class="field"><option>1:51</option></select></span>
    <svg class="i14 lock" viewBox="0 0 20 20"><path d="M6 9V7a4 4 0 0 1 8 0v2" fill="none" stroke="#555" stroke-width="2"/><path d="M3 9h14v9H3z" fill="#555"/></svg>
    <label for="mag">Amplificador</label>
    <span class="spin"><input id="mag" class="field" type="text" value="100%"><i class="up"></i><i class="open"></i></span>
    <label for="rot">Rotación</label>
    <span class="spin rot"><input id="rot" class="field" type="text" value="0,0 °"><i class="up"></i><i class="open"></i></span>
    <label class="render"><input type="checkbox" checked>Representar</label>
    <button class="crs"><svg class="i14" viewBox="0 0 20 20"><path d="M1 10C2 1 18 1 19 10l-9 9z" fill="#999"/><path d="M1 8h18M3 12h14M6 4v11M10 3v15M14 4v11" stroke="#555" stroke-width="1.200"/></svg>EPSG:4326</button>
    <button class="log" aria-label="Mensajes"><svg class="i14" viewBox="0 0 20 20"><ellipse cx="10" cy="9" rx="9.500" ry="7.500" fill="#555"/><path d="m9 15 6 4-1-5z" fill="#555"/><path d="M5 9h2M9 9h2M13 9h2" stroke="#fff" stroke-width="2"/></svg></button>
  </footer>

  <footer class="taskbar">
    <button class="weather">
      <svg viewBox="0 0 22 22"><circle cx="11" cy="11" r="8.500" fill="#f29b35"/><path d="M3 7a3 3 0 0 1 5-4 3 3 0 0 1 3 5H3c-3 0-3-2 0-1zM12 19c-3 0-2-4 1-3 1-4 6-3 6 0 4 0 3 3 1 3z" fill="#d9e5f5"/></svg>
      <span>26°C<br>Parc. soleado</span>
    </button>
    <button class="start" aria-label="Inicio"><svg viewBox="0 0 20 20"><path d="M0 0h9.500v9.500H0zM10.500 0H20v9.500h-9.500zM0 10.500h9.500V20H0zM10.500 10.500H20V20h-9.500z" fill="#46bdea"/><path d="M0 0h9.500v9.500H0zM10.500 0H20v4h-9.500z" fill="#8bdcf5" opacity=".6"/></svg></button>
    <label class="tasksearch"><svg><use href="#search"/></svg><input type="text" placeholder="Búsqueda" aria-label="Búsqueda">
      <svg class="art" viewBox="0 0 34 24"><path d="M2 9c2-3 4-2 5 1s4 4 8 2" fill="none" stroke="#db5b80" stroke-width="2"/><path d="M12 12 23 2l-3 8 6 0-6 4-7 1z" fill="#d98fd0"/><path d="m17 7 6-6-1 8z" fill="#322568"/><path d="M16 14v8h3M20 13l5 4-3 3" fill="none" stroke="#cb6690" stroke-width="1.400"/><circle cx="6" cy="20" r="2.500" fill="#9bce91"/><circle cx="28" cy="19" r="3" fill="#a9d795"/></svg>
    </label>
    <nav class="apps">
      <button aria-label="Vista de tareas"><svg viewBox="0 0 22 22"><path d="M1 7h13v12H1z" fill="#616167"/><path d="M7 2h14v13H7z" fill="#e5e5e8"/><path d="M7 7h7v8H7z" fill="#a2a2a8"/></svg></button>
      <button class="run" aria-label="Explorador"><svg viewBox="0 0 22 22"><path d="M1 3h7l2 2h11v15H1z" fill="#d99f24"/><path d="M1 7h20v13H1z" fill="#f9d45c"/><path d="M5 13h12v7H5z" fill="#287bc1"/><path d="M8 16h6v4H8z" fill="#195488"/></svg></button>
      <button aria-label="Edge"><svg viewBox="0 0 22 22"><circle cx="11" cy="11" r="10" fill="#197dcc"/><path d="M2 8C5-1 20-1 21 10c0 4-4 6-8 4 2-4-1-8-5-7-3 0-5 1-6 3z" fill="#42c9b2"/><path d="M12 2c6 0 9 4 9 8s-3 5-6 5c1-4 1-8-3-13z" fill="#75d65c" opacity=".7"/><path d="M8 9c-3 4 0 10 6 11-5 2-12-1-12-9z" fill="#14529d"/></svg></button>
      <button aria-label="Microsoft Store"><svg viewBox="0 0 22 22"><path d="M7 5V2h8v3" fill="none" stroke="#3ba8df" stroke-width="1.500"/><path d="M1 5h20v14q0 2-2 2H3q-2 0-2-2z" fill="#f6f6f7"/><path d="M7 8h4v4H7z" fill="#e34b2f"/><path d="M12 8h4v4h-4z" fill="#76ad2f"/><path d="M7 13h4v4H7z" fill="#2d9be0"/><path d="M12 13h4v4h-4z" fill="#efb62a"/></svg></button>
      <button aria-label="Chrome"><svg viewBox="0 0 22 22"><circle cx="11" cy="11" r="10" fill="#f4c72e"/><path d="M11 11 2.300 6A10 10 0 0 1 19.700 6H11z" fill="#e1453c"/><path d="M11 11v10A10 10 0 0 1 2.300 6l5 8.500z" fill="#35a354"/><circle cx="11" cy="11" r="5" fill="#fff"/><circle cx="11" cy="11" r="3.800" fill="#417fe0"/></svg></button>
      <button aria-label="Outlook"><svg viewBox="0 0 22 22"><path d="M8 5h10v12H8z" fill="#35a6e6"/><path d="M10 10h9v7h-9z" fill="#147dca"/><path d="M4 7h9v9H4z" fill="#0864b5"/><circle cx="8.500" cy="11.500" r="2.200" fill="none" stroke="#fff" stroke-width="1.300"/></svg></button>
      <button class="run" aria-label="Spotify"><svg viewBox="0 0 22 22"><circle cx="11" cy="11" r="10" fill="#35d268"/><path d="M5 8q6-2 12 1M6 11.500q5-1.500 10 1M6.500 15q4-1 8 .8" fill="none" stroke="#142217" stroke-width="2" stroke-linecap="round"/></svg></button>
      <button class="run" aria-label="Captura"><svg viewBox="0 0 22 22"><circle cx="11" cy="11" r="10" fill="#7cb843"/><path d="m4 15 12-8M8 7l7 9M11 11h6" stroke="#f2f6ec" stroke-width="2"/><circle cx="5" cy="14" r="2.500" fill="#f2f6ec"/><circle cx="15" cy="6" r="2.500" fill="#f2f6ec"/><circle cx="14" cy="16" r="2" fill="#f2f6ec"/></svg></button>
      <button class="run active" aria-label="QGIS"><svg><use href="#qgis"/></svg></button>
      <button class="run" aria-label="OBS"><svg viewBox="0 0 22 22"><circle cx="10" cy="12" r="9" fill="#29272b" stroke="#ddd" stroke-width="1.300"/><path d="M10 12C5 10 6 5 10 4M10 12c5-3 8 0 8 4M10 12c0 5-5 6-8 4" stroke="#ddd" stroke-width="1.800" fill="none"/><circle cx="17" cy="5" r="5" fill="#ed1411"/></svg></button>
    </nav>
    <div class="tray">
      <button aria-label="Iconos ocultos"><svg viewBox="0 0 16 16"><path d="m4 10 4-4 4 4" fill="none" stroke="#eee" stroke-width="1.500"/></svg></button>
      <button aria-label="OneDrive"><svg viewBox="0 0 16 16"><path d="M3 12c-3 0-3-5 0-5 1-5 7-5 8-1 4 0 4 6 1 6z" fill="#c8ccd2"/><circle cx="12" cy="11" r="3" fill="#93b9e2"/></svg></button>
      <button aria-label="Micrófono"><svg viewBox="0 0 16 16"><rect x="6" y="1" width="4" height="8" rx="2" fill="none" stroke="#ddd"/><path d="M3.500 7c0 6 9 6 9 0M8 11.500V15" fill="none" stroke="#ddd"/></svg></button>
      <span class="lang">ESP<br>LAA</span>
      <button class="net" aria-label="Red, volumen y batería"><svg viewBox="0 0 16 16"><path d="M1 6q7-6 14 0M3.500 9q4.500-4 9 0" fill="none" stroke="#eee" stroke-width="1.500"/><circle cx="8" cy="12" r="1.800" fill="#eee"/></svg><svg viewBox="0 0 16 16"><path d="M2 6h3l4-3v10l-4-3H2zM11 5q2 3 0 6" fill="none" stroke="#eee" stroke-width="1.300"/></svg><svg viewBox="0 0 16 16"><rect x="1" y="4" width="12" height="8" rx="2" fill="none" stroke="#eee" stroke-width="1.300"/><path d="M3 6h4v4H3zM14 6.500h1.500v3H14z" fill="#eee"/></svg></button>
      <time>4:39 p. m.<br>6/06/2024</time>
      <button class="bell" aria-label="Notificaciones"><svg viewBox="0 0 16 16"><path d="M8 1c-6 0-4 7-6 10v1h12v-1c-2-3 0-10-6-10zM6 13h4q-2 3-4 0z" fill="#b9e3f5"/></svg></button>
      <button class="copilot" aria-label="Copilot"><svg viewBox="0 0 22 22"><path d="M6 2h6L8 14H2C0 14 3 2 6 2z" fill="#38a9e8"/><path d="M12 2c4 0 4 3 5 5h-6L8 16H3c4 0 4-4 6-14z" fill="#5fd38e"/><path d="M13 7h6c4 1 1 12-4 12H9z" fill="#bd5ddd"/><path d="M8 12h8l-3 7H8c-3 0-2-3-4-5z" fill="#f0a03c"/><rect x="8" y="13" width="13" height="7" rx="2" fill="#eeb450"/><path d="M10 15v4M10 15h2v2h-2M14 19v-4h2v4M18 15h2M18 17h2M18 19h2M18 15v4" fill="none" stroke="#6b4a18" stroke-width=".9"/></svg></button>
    </div>
  </footer>
</div>
</body>
</html>
```

FILE: styles.css
```css
* { box-sizing: border-box; }
html, body { height: 100%; }
body { margin: 0; font: 10px/15px Roboto, "Open Sans", sans-serif; color: #222; background: #f0f0f0; }
button, input, select { font: inherit; color: inherit; }
button { border: 0; padding: 0; margin: 0; background: none; }
input { margin: 0; min-width: 0; }
h1, h2, p, ul { margin: 0; padding: 0; font-size: inherit; font-weight: 400; }
ul { list-style: none; }
svg { display: block; flex: none; width: 14px; height: 14px; }
svg text { font-family: Roboto, sans-serif; }
.sprite { position: absolute; width: 0; height: 0; overflow: hidden; }
.i14 { width: 14px; height: 14px; }
.app { display: flex; flex-direction: column; min-height: 100vh; }

/* arrow glyphs shared by trees, scrollbars and spin boxes */
i.open, i.shut, i.up, i.left { flex: none; width: 0; height: 0; border: 3px solid transparent; }
i.open { border-top: 4px solid #444; border-bottom: 0; }
i.up { border-bottom: 4px solid #444; border-top: 0; }
i.shut { border-left: 4px solid #444; border-right: 0; }
i.left { border-right: 4px solid #444; border-left: 0; }

.titlebar { display: flex; align-items: center; height: 20px; background: #f3f3f3; padding-left: 2px; gap: 3px; }
.titlebar h1 { flex: 1; }
.wincontrols { display: flex; }
.wincontrols button { width: 39px; height: 20px; display: grid; place-items: center; }
.wincontrols svg { width: 12px; height: 12px; }
.menubar { display: flex; gap: 12px; height: 16px; padding-left: 9px; background: #efefef; }
.menubar button { white-space: nowrap; line-height: 16px; }
.menubar u { text-underline-offset: 1px; }

.toolbar { display: flex; align-items: center; height: 33px; border-top: 1px solid #cfcfcf; background: linear-gradient(#fcfcfc, #efefef); }
.tb { flex: none; display: flex; align-items: center; justify-content: center; width: 27px; height: 27px; }
.tb svg { width: 20px; height: 20px; }
.tb.wide { width: 28px; }
.tb.on { background: #dcdce0; border: 1px solid #b2b2b8; }
.tb.drop { width: 38px; justify-content: flex-start; padding-left: 4px; gap: 4px; }
.drop::after { content: ""; border: 3px solid transparent; border-top: 4px solid #333; border-bottom: 0; }
.drop.off::after { border-top-color: #999; }
.grip { flex: none; width: 12px; height: 18px; background: radial-gradient(circle, #d0d0d0 1px, transparent 1px) center / 3px 4px repeat-y; }
.grip.first { width: 11px; }
.grip.m { width: 14px; }
.grip.l { width: 17px; }
.sep { flex: none; width: 7px; height: 22px; background: linear-gradient(#d4d4d4, #d4d4d4) center / 1px 100% no-repeat; }
.geocoder { width: 76px; height: 18px; border: 1px solid #b5b5b5; border-radius: 2px; background: #fff; padding: 0 2px; font-size: 8px; }
::placeholder { color: #888; opacity: 1; }

.work { flex: 1; display: grid; grid-template-columns: 38px 209px minmax(0, 1fr) 227px; column-gap: 5px; border-top: 1px solid #b9b9b9; }
.sidebar { padding: 7px 0 0 3px; background: linear-gradient(90deg, #fafafa, #efefef); }
.sidebar .tb.drop { width: 36px; gap: 6px; }
.docks { display: flex; flex-direction: column; min-width: 0; padding: 0 2px 1px 0; }
.dockhead { display: flex; align-items: center; height: 16px; padding-left: 4px; }
.dockhead h2 { flex: 1; }
.dockhead button { width: 12px; height: 12px; }
.dockhead svg { width: 10px; height: 10px; }
.minibar { display: flex; align-items: center; height: 24px; padding-left: 3px; }
.minibar button { width: 21px; height: 20px; display: grid; place-items: center; }
.minibar .drop { display: flex; align-items: center; gap: 4px; width: 30px; padding-left: 3px; }
.minibar .sep { width: 5px; height: 16px; }
.browser { margin-bottom: 5px; }
.treebox { display: grid; grid-template: 1fr 11px / minmax(0, 1fr) 11px; height: 151px; border: 1px solid #bbb; background: #fff; }
.tree li { display: flex; align-items: center; height: 15px; padding-left: 4px; white-space: nowrap; overflow: hidden; }
.tree i { flex: none; }
.tree i:not([class]) { width: 6px; }
.tree i.shut { margin-right: 2px; }
.tree svg { margin: 0 5px 0 6px; width: 13px; height: 13px; }
.treebox .tree { overflow: hidden; padding-top: 1px; }
.tree .sub { padding-left: 17px; }
.vscroll, .hscroll { display: flex; align-items: center; justify-content: space-between; background: #fff; }
.vscroll { flex-direction: column; padding: 3px 0; }
.vscroll b { margin-top: auto; width: 100%; height: 70px; background: #d9d9d9; margin-bottom: 4px; }
.hscroll { padding: 0 4px; border-top: 1px solid #ddd; }
.hscroll b { width: 103px; height: 100%; background: #d9d9d9; margin-left: auto; margin-right: 6px; }
.layers { flex: 1; display: flex; flex-direction: column; }
.layerlist { flex: 1; border: 1px solid #bbb; background: #fff; }
.layer { display: flex; align-items: center; height: 15px; padding-left: 19px; background: #0f78d4; color: #fff; font-weight: 700; }
.layer span { text-decoration: underline; }
.layer .sym { width: 5px; height: 5px; border-radius: 50%; background: #c24d80; margin: 0 8px 0 10px; }
input[type="checkbox"] { appearance: none; flex: none; width: 12px; height: 12px; background: #fff; border: 1px solid #aaa; display: grid; place-items: center; }
input[type="checkbox"]:checked::after { content: ""; width: 4px; height: 8px; border: solid #111; border-width: 0 2px 2px 0; rotate: 40deg; margin-top: -2px; }

.canvas { display: flex; flex-direction: column; min-width: 0; border: 1px solid #c2c2c2; border-top: 0; background: #fff; margin: 0 0 1px -1px; }
.message { display: flex; align-items: center; height: 22px; padding: 0 18px 0 7px; background: #dff5d3; border-bottom: 1px solid #a9bfa0; font-family: "Open Sans", sans-serif; font-size: 8px; }
.message .check { width: 20px; height: 16px; margin-right: 8px; }
.message p { flex: 1; white-space: nowrap; overflow: hidden; }
.message a { color: #3e8f28; }
.message button svg { width: 16px; height: 16px; }
.map { flex: 1; }
.map svg { width: 100%; height: 100%; }

.processing { display: flex; flex-direction: column; min-width: 0; padding-bottom: 1px; }
.search { display: flex; align-items: center; gap: 5px; height: 18px; padding-left: 5px; border: 1px solid #b5b5b5; background: #fff; color: #777; }
.search svg { width: 12px; height: 12px; }
.search input { flex: 1; border: 0; padding: 0; background: none; font-size: 9px; }
.algs { flex: 1; padding-top: 2px; background: #fff; border: 1px solid #ccc; border-width: 0 1px; }
.algs li { padding-left: 6px; }
.algs svg { margin-left: 7px; }
.hint { background: #56a8fa; color: #fff; font-family: "Open Sans", sans-serif; font-size: 8px; line-height: 11px; padding: 0 2px; border: 1px solid #4a94df; }
.hint a { color: #0a17c7; }
.hint .close { margin-left: 6px; }

.status { display: flex; align-items: center; height: 23px; padding: 0 5px 0 4px; white-space: nowrap; background: #f0f0f0; font-size: 9px; }
.locator { display: flex; align-items: center; gap: 5px; width: 194px; height: 19px; border: 1px solid #b5b5b5; background: #fff; padding: 0 6px; color: #777; }
.locator svg { width: 12px; height: 12px; }
.locator input { flex: 1; border: 0; padding: 0; background: none; }
.note { flex: 1; padding-left: 7px; }
.field { height: 18px; border: 1px solid #bbb; background: #fff; padding: 0 3px; border-radius: 0; }
.coord { width: 129px; margin: 0 3px; text-align: center; white-space: pre; }
.extent { margin-right: 10px; }
.selectwrap { position: relative; margin: 0 8px 0 3px; }
.selectwrap .field { appearance: none; width: 63px; display: block; }
.selectwrap::after { content: ""; position: absolute; right: 5px; top: 7px; border: 3px solid transparent; border-top: 4px solid #333; border-bottom: 0; pointer-events: none; }
.lock { margin-right: 5px; }
.spin { display: grid; grid-template: 8px 8px / minmax(0, 1fr) 12px; width: 66px; height: 18px; margin: 0 8px 0 3px; align-items: center; background: #fff; border: 1px solid #bbb; }
.spin .field { grid-row: 1 / 3; width: 100%; height: 16px; border: 0; }
.spin.rot { margin-left: 6px; }
.render { display: flex; align-items: center; gap: 3px; margin-right: 12px; }
.crs { display: flex; align-items: center; gap: 1px; margin-right: 18px; }

.taskbar { display: flex; align-items: center; height: 39px; background: linear-gradient(90deg, #14121e 0 50%, #221014 68%, #16131c 82%); color: #e8e8e8; white-space: nowrap; line-height: 13px; }
.taskbar button { flex: none; display: grid; place-items: center; }
.taskbar .weather { display: flex; gap: 6px; align-items: center; width: 342px; padding-left: 16px; text-align: left; }
.weather svg { width: 21px; height: 21px; }
.start svg { width: 20px; height: 20px; }
.tasksearch { display: flex; align-items: center; width: 180px; height: 26px; margin: 0 3px 0 12px; border-radius: 13px; background: #f5f5f5; color: #333; padding: 0 8px 0 9px; gap: 7px; }
.tasksearch input { flex: 1; border: 0; padding: 0; background: none; font-size: 12px; }
.tasksearch .art { width: 34px; height: 24px; }
.apps { display: flex; flex: 1; }
.taskbar .apps button { position: relative; width: 36px; height: 36px; border-radius: 4px; }
.apps svg { width: 21px; height: 21px; }
.apps .active { background: #33242a; }
.apps .run::after { content: ""; position: absolute; left: 15px; right: 15px; bottom: 1px; height: 2px; border-radius: 1px; background: #9b9b9b; }
.apps .active::after { left: 11px; right: 11px; background: #94cbe0; }
.tray { display: flex; align-items: center; padding-right: 15px; }
.tray button { width: 27px; }
.tray .lang { width: 37px; text-align: center; }
.taskbar .tray .net { display: flex; gap: 5px; width: 60px; }
.tray time { width: 56px; text-align: right; }
.tray .bell { width: 24px; }
.tray .copilot { width: 30px; justify-items: end; }
.tray .copilot svg { width: 22px; height: 22px; }
```
